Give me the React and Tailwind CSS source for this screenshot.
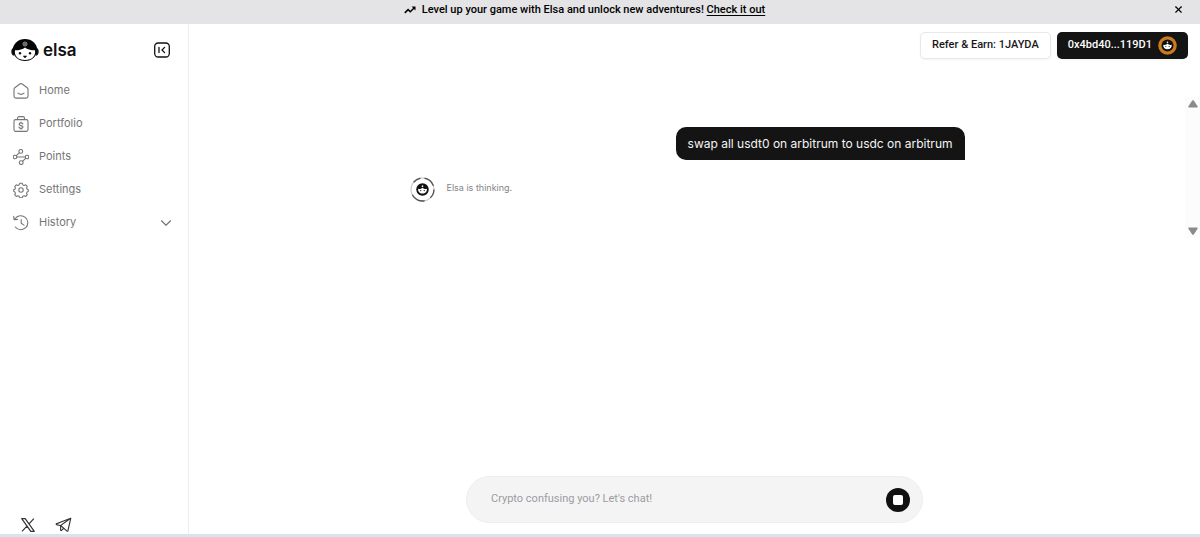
import React, { useState } from "react";
import { ChevronDown, X } from "lucide-react";
import { PiTelegramLogo } from "react-icons/pi";

const ElsaLogo = () => (
  <svg width="28" height="22" viewBox="0 0 28 22" aria-hidden="true">
    <path d="M3 8.500C.8 9.500.3 11 .3 12.800s.7 3.400 2.700 4ZM25 8.500c2.200 1 2.700 2.500 2.700 4.300s-.7 3.400-2.700 4Z" fill="#111" />
    <ellipse cx="14" cy="11" rx="12.200" ry="10.900" fill="#050505" />
    <path d="M14 8.400c2 1.900 5.600 2.800 10 2.900.9 5.700-2.900 9.800-10 9.800S3.100 17 4 11.300c4.400-.1 8-1 10-2.900Z" fill="#fff" />
    <circle cx="14" cy="5" r="2" fill="#111" stroke="#bbb" strokeWidth="0.800" />
    <circle cx="14" cy="5" r="0.800" fill="#ddd" />
    <circle cx="9" cy="14.200" r="1.200" fill="#111" />
    <circle cx="19" cy="14.200" r="1.200" fill="#111" />
    <path d="M12.300 17h3.400L14 19Z" fill="#111" stroke="#111" strokeWidth="0.600" strokeLinejoin="round" />
  </svg>
);

const ElsaFace = () => (
  <>
    <circle cx="12" cy="12" r="6" fill="#111" />
    <path d="M7.800 11.200c1.700.5 3.400.1 4.200-1.200.8 1.300 2.500 1.700 4.200 1.200.3 2.700-1.400 4.600-4.200 4.600s-4.500-1.900-4.200-4.600Z" fill="#fff" />
    <circle cx="12" cy="8.800" r="0.800" fill="#fff" />
    <circle cx="10.300" cy="13" r="0.600" fill="#111" />
    <circle cx="13.700" cy="13" r="0.600" fill="#111" />
  </>
);

const NavSvg = ({ children }) => (
  <svg
    width="16"
    height="16"
    viewBox="0 0 16 16"
    fill="none"
    stroke="currentColor"
    strokeWidth="1.100"
    strokeLinecap="round"
    strokeLinejoin="round"
    aria-hidden="true"
    className="shrink-0"
  >
    {children}
  </svg>
);

const HomeIcon = () => (
  <NavSvg>
    <path d="M1 6.200c0-.6.300-1.100.8-1.500L6.800 1c.7-.5 1.700-.5 2.400 0l5 3.700c.5.400.8.900.8 1.500v7c0 1.100-.8 1.900-1.900 1.900H2.900C1.800 15.100 1 14.300 1 13.200Z" />
    <path d="M5 10.200c1.600 1.500 4.400 1.500 6 0" />
  </NavSvg>
);

const PortfolioIcon = () => (
  <NavSvg>
    <rect x="1" y="3.600" width="14" height="11.800" rx="1.600" />
    <path d="M4.500 3.400V2.200C4.500 1.300 5.200.6 6.100.6h3.800c.9 0 1.600.7 1.600 1.600v1.200" />
    <path d="M9.900 8c-.2-.8-.9-1.100-1.900-1.100-1.100 0-1.900.5-1.900 1.300 0 1.900 3.900.9 3.900 2.900 0 .8-.9 1.300-2 1.300s-1.900-.5-2-1.300M8 6v.9M8 12.400v.8" />
  </NavSvg>
);

const PointsIcon = () => (
  <NavSvg>
    <circle cx="7.800" cy="2.400" r="1.900" />
    <circle cx="2" cy="8" r="1.800" />
    <circle cx="14" cy="8" r="1.800" />
    <circle cx="8.200" cy="13.600" r="1.900" />
    <path d="M3.800 8h8.400M3.300 6.700l3-2.900M12.700 9.300l-3 2.900" />
  </NavSvg>
);

const SettingsIcon = () => (
  <NavSvg>
    <circle cx="8" cy="8" r="2.200" />
    <path d="M6.800 1.300h2.400l.7 1.600 1.200.5 1.600-.6 1.500 1.600-.6 1.600.4 1.100 1.300.7v1.500l-1.300.8-.4 1.100.6 1.600-1.500 1.600-1.600-.6-1.200.5-.7 1.400H6.800l-.7-1.400-1.200-.5-1.600.6-1.500-1.600.6-1.600-.4-1.100-1.300-.8V7.800L2 7.100 2.400 6l-.6-1.600 1.500-1.600 1.600.6 1.200-.5Z" />
  </NavSvg>
);

const HistoryIcon = () => (
  <NavSvg>
    <path d="M2 3.800A7 7 0 1 1 2.300 12" />
    <path d="M.7 1.400l.5 3.400 3.300-.4M.8 3.300l2 1.400M8.200 4.500v3.800l2.800 1.800" />
  </NavSvg>
);

const CollapseIcon = () => (
  <svg width="16" height="16" viewBox="0 0 16 16" fill="none" stroke="#111" strokeWidth="1.300" strokeLinecap="round" strokeLinejoin="round" aria-hidden="true">
    <rect x="0.700" y="1" width="14.600" height="14" rx="3.500" />
    <path d="M5 5.400v5.200M10.600 5.400L8 8l2.600 2.600" />
  </svg>
);

const TrendIcon = () => (
  <svg width="12" height="8" viewBox="0 0 12 8" fill="none" stroke="currentColor" strokeWidth="1.500" aria-hidden="true">
    <path d="M.8 6.900l3.300-3.300 2.200 2.100L10.600 1.500" />
    <path d="M7.600 .500h3.900v3.900Z" fill="currentColor" stroke="none" />
  </svg>
);

const XLogo = () => (
  <svg width="14" height="14" viewBox="0 0 14 14" fill="none" stroke="currentColor" strokeWidth="1.200" strokeLinejoin="round" aria-hidden="true">
    <path d="M.7.700h3.500l9.100 12.600H9.800ZM12.800.700L7.800 6.200M6.200 7.900L1 13.300" />
  </svg>
);

const navItems = [
  { label: "Home", Icon: HomeIcon },
  { label: "Portfolio", Icon: PortfolioIcon },
  { label: "Points", Icon: PointsIcon },
  { label: "Settings", Icon: SettingsIcon },
];

const Banner = ({ onClose }) => (
  <div className="flex h-6 items-start bg-[#e4e4e6] px-4 font-[Roboto,sans-serif] text-[11px] leading-[19px] font-medium text-black">
    <div className="flex flex-1 items-center justify-center gap-[6px] pr-5">
      <TrendIcon />
      <p>
        Level up your game with Elsa and unlock new adventures!{" "}
        <a href="#adventures" className="underline underline-offset-2">
          Check it out
        </a>
      </p>
    </div>
    <button type="button" aria-label="Close banner" onClick={onClose} className="flex h-[18px] items-center">
      <X size={11} strokeWidth={2.5} />
    </button>
  </div>
);

const Sidebar = () => {
  const [historyOpen, setHistoryOpen] = useState(false);

  return (
    <aside className="flex w-[189px] shrink-0 flex-col border-r border-[#ededed] text-[#757575]">
      <div className="flex items-center justify-between pt-[15px] pr-[18px] pl-[11px]">
        <a href="#home" className="flex items-center gap-1 text-[#111]">
          <ElsaLogo />
          <span className="text-[17px] leading-[22px] font-semibold">elsa</span>
        </a>
        <button type="button" aria-label="Collapse sidebar">
          <CollapseIcon />
        </button>
      </div>

      <nav className="flex flex-col pt-[13px] text-[11px]">
        {navItems.map(({ label, Icon }) => (
          <a key={label} href={`#${label.toLowerCase()}`} className="flex h-[33px] items-center gap-[10px] px-[13px]">
            <Icon />
            {label}
          </a>
        ))}
        <button
          type="button"
          aria-expanded={historyOpen}
          onClick={() => setHistoryOpen(!historyOpen)}
          className="flex h-[33px] items-center gap-[10px] px-[13px]"
        >
          <HistoryIcon />
          History
          <ChevronDown size={18} strokeWidth={1.5} className="ml-auto" />
        </button>
      </nav>

      <div className="mt-auto flex items-center gap-5 pl-[21px] text-[#333]">
        <a href="#x" aria-label="X">
          <XLogo />
        </a>
        <a href="#telegram" aria-label="Telegram">
          <PiTelegramLogo size={18} />
        </a>
      </div>
    </aside>
  );
};

const Header = () => (
  <header className="flex justify-end gap-[6px] pt-2 pr-3 font-[Roboto,sans-serif] text-[11px] font-medium">
    <button type="button" className="h-[27px] rounded-[5px] border border-[#e8e8e8] bg-white px-[11px] text-[#18181b] shadow-xs">
      Refer &amp; Earn: 1JAYDA
    </button>
    <button type="button" className="flex h-[27px] items-center gap-[6px] rounded-[5px] bg-[#141414] px-[11px] text-white shadow-xs">
      0x4bd40...119D1
      <svg width="19" height="19" viewBox="2.500 2.500 19 19" aria-hidden="true">
        <circle cx="12" cy="12" r="9.300" fill="#cc7a1e" />
        <ElsaFace />
      </svg>
    </button>
  </header>
);

const Chat = () => (
  <section className="flex h-[141px]">
    <div className="flex flex-1 justify-center pt-[30px]">
      <div className="flex w-full max-w-[555px] flex-col">
        <p className="self-end rounded-[10px] rounded-br-none bg-[#141414] px-3 py-[7px] text-[12px] leading-[19px] text-[#f4f4f4]">
          swap all usdt0 on arbitrum to usdc on arbitrum
        </p>
        <div className="mt-[17px] flex items-center gap-3">
          <svg width="25" height="25" viewBox="0 0 24 24" fill="none" aria-hidden="true">
            <circle cx="12" cy="12" r="11" stroke="#c4c4c4" strokeWidth="1" />
            <path d="M3.500 5A11 11 0 0 1 10 1.200M14 1.200A11 11 0 0 1 22.500 8.500M23 12a11 11 0 0 1-3.500 8M14 22.800A11 11 0 0 1 2.200 17" stroke="#555" strokeWidth="1.300" />
            <ElsaFace />
          </svg>
          <p className="pb-[3px] text-[9px] leading-[14px] text-[#858585]">Elsa is thinking.</p>
        </div>
      </div>
    </div>

    {/* scroll rail */}
    <div className="flex w-[15px] flex-col items-center justify-between bg-[#fcfcfc] py-[3px] text-[#8a8a8a]">
      <svg width="10" height="8" viewBox="0 0 10 8" fill="currentColor" aria-hidden="true">
        <path d="M4.200.600Q5-.200 5.800.600L9.700 6.400Q10 7.500 9 7.500H1Q0 7.500.3 6.400Z" />
      </svg>
      <svg width="10" height="8" viewBox="0 0 10 8" fill="currentColor" aria-hidden="true">
        <path d="M4.200 7.400Q5 8.200 5.800 7.400L9.700 1.600Q10 .500 9 .500H1Q0 .500.3 1.600Z" />
      </svg>
    </div>
  </section>
);

const Composer = () => {
  const [message, setMessage] = useState("");

  return (
    <form
      onSubmit={(e) => e.preventDefault()}
      className="mx-auto mt-auto mb-[11px] flex h-[47px] w-full max-w-[457px] items-center rounded-full border border-[#eeeeee] bg-[#f4f4f4] pr-3 pl-6"
    >
      <input
        type="text"
        aria-label="Message"
        placeholder="Crypto confusing you? Let's chat!"
        value={message}
        onChange={(e) => setMessage(e.target.value)}
        className="min-w-0 flex-1 bg-transparent font-[Roboto,sans-serif] text-[11px] text-[#333] outline-none placeholder:text-[#9c9ca3]"
      />
      <button type="button" aria-label="Stop" className="flex size-6 items-center justify-center rounded-full bg-[#111]">
        <span className="size-[10px] rounded-[2px] bg-white" />
      </button>
    </form>
  );
};

const App = () => {
  const [showBanner, setShowBanner] = useState(true);

  return (
    <div className="flex min-h-screen flex-col border-b-[3px] border-[#d8e4ee] bg-white font-[Inter,'Liberation_Sans',sans-serif]">
      {showBanner && <Banner onClose={() => setShowBanner(false)} />}
      <div className="flex flex-1">
        <Sidebar />
        <main className="flex min-w-0 flex-1 flex-col">
          <Header />
          <div className="pt-[38px]">
            <Chat />
          </div>
          <Composer />
        </main>
      </div>
    </div>
  );
};

export default App;
